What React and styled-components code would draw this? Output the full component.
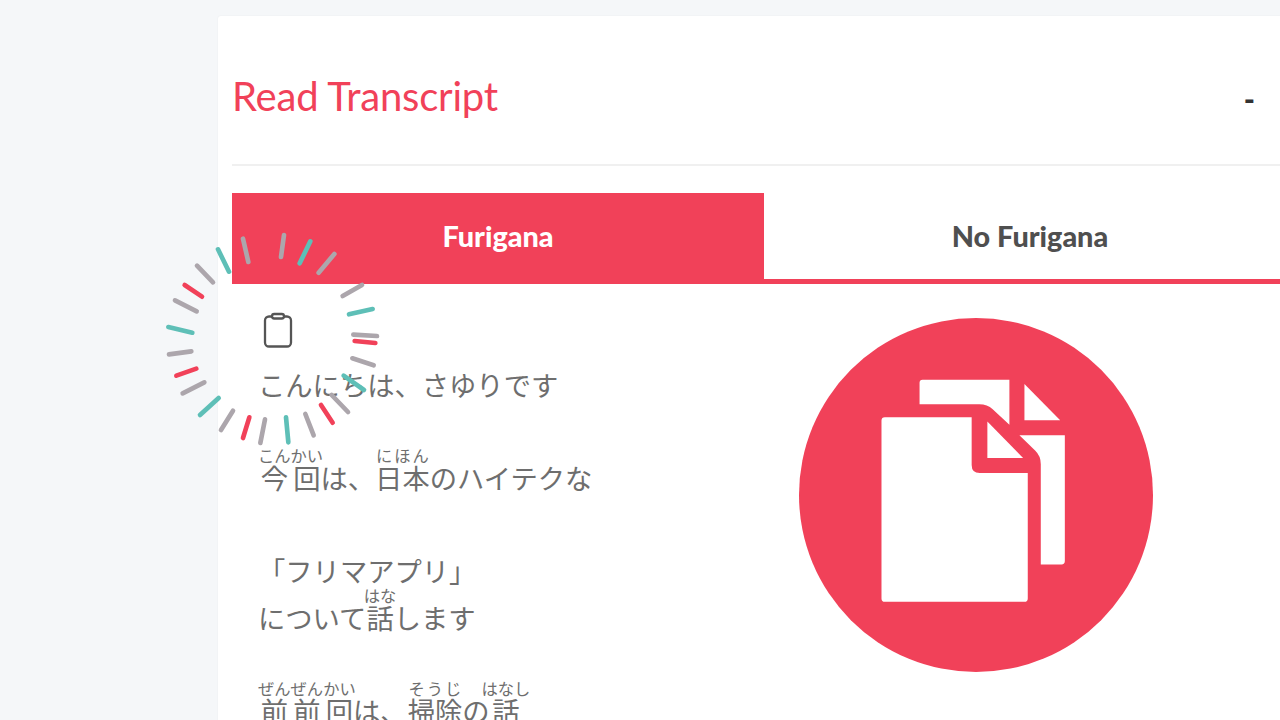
import styled, { createGlobalStyle } from 'styled-components'

const RED = '#f14159'

const GlobalStyle = createGlobalStyle`
  html, body {
    margin: 0;
    padding: 0;
    height: 720px;
    overflow: hidden;
    background: #f5f7f9;
  }
`

const Page = styled.div`
  width: 1280px;
  height: 720px;
  overflow: hidden;
  padding: 16px 0 0 218px;
  box-sizing: border-box;
`

const Card = styled.div`
  position: relative;
  width: 1092px;
  height: 800px;
  padding: 0 14px;
  box-sizing: border-box;
  background: #fff;
  border-radius: 3px;
  box-shadow: 0 0 2px rgba(0, 0, 0, 0.06);
`

const Header = styled.div`
  display: flex;
  align-items: center;
  justify-content: space-between;
  height: 136px;
  padding-top: 12px;
  border-bottom: 2px solid #f0f0f0;
`

const Title = styled.h2`
  margin: 0;
  font-family: Lato, sans-serif;
  font-weight: 400;
  font-size: 40px;
  letter-spacing: -0.2px;
  color: ${RED};
`

const Collapse = styled.span`
  margin: 6px 41px 0 0;
  font-family: Lato, sans-serif;
  font-weight: 900;
  font-size: 30px;
  color: #333;
`

const Tabs = styled.div`
  display: flex;
  margin-top: 27px;
`

const Tab = styled.div`
  flex: 0 0 532px;
  height: 91px;
  box-sizing: border-box;
  display: flex;
  align-items: center;
  justify-content: center;
  padding-bottom: 1px;
  font-family: Lato, sans-serif;
  font-weight: 900;
  font-size: 28.8px;
  background: ${({ $active }) => ($active ? RED : '#fff')};
  color: ${({ $active }) => ($active ? '#fff' : '#4f4f4f')};
  border-bottom: 5px solid ${RED};
`

const Body = styled.div`
  display: flex;
`

const Transcript = styled.div`
  flex: 0 0 532px;
  padding: 28px 0 0 26px;
  box-sizing: border-box;
`

const CopyButton = styled.div`
  margin-left: 4px;
  height: 36px;
`

const Text = styled.p`
  margin: 13px 0 0;
  font-family: "Noto Sans CJK JP", sans-serif;
  font-weight: 400;
  font-size: 27.3px;
  line-height: 46.5px;
  color: #6e6e6e;

  rt {
    font-size: 16.3px;
    line-height: 20px;
  }
`

const Illustration = styled.div`
  flex: 1;
  padding: 33.5px 0 0 34.5px;
`

const BurstWrap = styled.div`
  position: absolute;
  left: -68px;
  top: 204px;
  width: 240px;
  height: 240px;
  pointer-events: none;
`

const C = { g: '#aca6ac', t: '#5ebfb7', r: RED }

const ticks = [
  [279, 56, 295, 126, 'g'], [402, 45, 393, 111, 'g'], [481, 64, 449, 130, 't'],
  [553, 102, 506, 158, 'g'], [636, 195, 578, 228, 'g'], [668, 267, 597, 283, 't'],
  [681, 348, 610, 344, 'g'], [676, 369, 614, 363, 'r'], [671, 436, 607, 415, 'g'],
  [642, 510, 581, 467, 't'], [594, 576, 545, 525, 'g'], [548, 608, 513, 555, 'r'],
  [491, 646, 466, 582, 'g'], [415, 667, 408, 592, 't'], [345, 598, 331, 669, 'g'],
  [298, 592, 279, 654, 'r'], [249, 572, 213, 630, 'g'], [206, 534, 150, 585, 't'],
  [163, 487, 98, 520, 'g'], [139, 446, 79, 467, 'r'], [124, 394, 57, 403, 'g'],
  [127, 338, 55, 321, 't'], [140, 274, 75, 241, 'g'], [156, 230, 104, 195, 'r'],
  [189, 187, 141, 137, 'g'], [237, 155, 204, 88, 't'],
]

const Burst = () => (
  <BurstWrap>
    <svg width="240" height="240" viewBox="0 0 720 720">
      {ticks.map(([x1, y1, x2, y2, c], i) => (
        <line key={i} x1={x1} y1={y1} x2={x2} y2={y2} stroke={C[c]} strokeWidth="14" strokeLinecap="round" />
      ))}
    </svg>
  </BurstWrap>
)

const ClipboardIcon = () => (
  <svg width="32" height="36" viewBox="0 0 32 36" fill="#fff" stroke="#555" strokeWidth="2.3" style={{ display: 'block' }}>
    <rect x="3" y="4.5" width="26" height="30" rx="4" />
    <rect x="10" y="2" width="12" height="4.5" rx="2.25" />
  </svg>
)

const DocsIcon = () => (
  <svg width="354" height="354" viewBox="56 52 1060 1060" style={{ display: 'block' }}>
    <circle cx="586" cy="582" r="530" fill={RED} />
    <path fill="#fff" d="M426 237H686V372L636 325Q620 310 596 310H417V246Q417 237 426 237Z" />
    <path fill="#fff" d="M731 250L838 358H731Z" />
    <path fill="#fff" d="M716 403H852V780Q852 790 842 790H780V490Q780 465 763 449Z" />
    <path fill="#fff" d="M313 349H573V492Q573 516 597 516H741V892Q741 902 731 902H313Q303 902 303 892V359Q303 349 313 349Z" />
    <path fill="#fff" d="M620 362L727 471H620Z" />
  </svg>
)

export default function App() {
  return (
    <Page>
      <GlobalStyle />
      <Card>
        <Header>
          <Title>Read Transcript</Title>
          <Collapse>-</Collapse>
        </Header>
        <Tabs>
          <Tab $active>Furigana</Tab>
          <Tab>No Furigana</Tab>
        </Tabs>
        <Body>
          <Transcript>
            <CopyButton>
              <ClipboardIcon />
            </CopyButton>
            <Text>
              こんにちは、さゆりです<br /><br />
              <ruby>今回<rt>こんかい</rt></ruby>は、<ruby>日本<rt>にほん</rt></ruby>のハイテクな<br /><br />
              「フリマアプリ」<br />
              について<ruby>話<rt>はな</rt></ruby>します<br /><br />
              <ruby>前前回<rt>ぜんぜんかい</rt></ruby>は、<ruby>掃除<rt>そうじ</rt></ruby>の<ruby>話<rt>はなし</rt></ruby>
            </Text>
          </Transcript>
          <Illustration>
            <DocsIcon />
          </Illustration>
        </Body>
        <Burst />
      </Card>
    </Page>
  )
}
